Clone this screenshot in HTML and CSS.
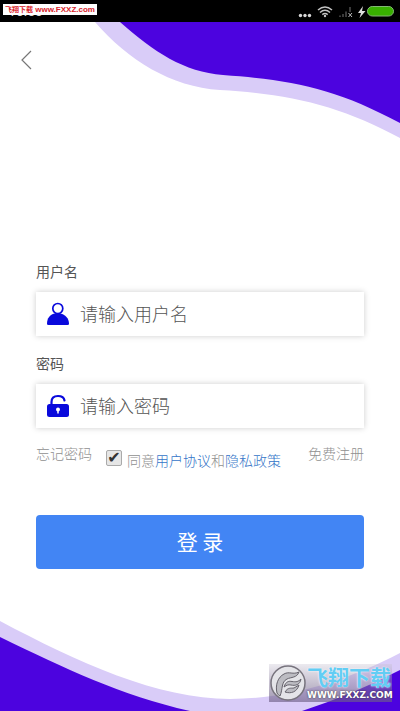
FILE: index.html
```html
<!DOCTYPE html>
<html lang="zh-CN">
<head>
<meta charset="utf-8">
<meta name="viewport" content="width=device-width, initial-scale=1">
<title>登录</title>
<link rel="stylesheet" href="styles.css">
</head>
<body>
<header class="status">
  <span class="clock">16:53</span>
  <span class="site-tag"><span class="site-name">飞翔下载</span> www.FXXZ.com</span>
  <svg class="status-icons" width="98" height="14" viewBox="0 0 98 14" aria-hidden="true">
    <g fill="#d8d8d8"><circle cx="2.500" cy="10.500" r="1.700"/><circle cx="7" cy="10.500" r="1.700"/><circle cx="11.500" cy="10.500" r="1.700"/></g>
    <g fill="none" stroke="#c4c4c4" stroke-width="1.500"><path d="M20 5Q27 -1 34 5M22 7.500Q27 3 32 7.500M24.300 9.700Q27 7.500 29.700 9.700"/></g>
    <circle cx="27" cy="11" r="1.200" fill="#c4c4c4"/>
    <path d="M42 12V10.500M45 12V9M48 12V6.500M52 7V2" stroke="#3a3a3a" stroke-width="2"/>
    <path d="M50.500 8L54 12M54 8L50.500 12" stroke="#bbb" stroke-width="1"/>
    <path d="M65 1L60 8H63L61.500 13L67.500 6H64Z" fill="#ddd"/>
    <rect x="69.500" y="1.500" width="26" height="9.500" rx="4.700" fill="#38b000" stroke="#83b972"/>
  </svg>
</header>
<main class="screen">
  <svg class="wave wave-top" viewBox="0 22 400 120" preserveAspectRatio="none" aria-hidden="true">
    <path fill="#d9ccf8" d="M95 22C128 60 171 87 220 90C290 94 341 106 400 138V22Z"/>
    <path fill="#4c03df" d="M120 22C154 52 184 72 223 75C292 80 335 88 400 123V22Z"/>
  </svg>
  <svg class="wave wave-bottom" viewBox="0 611 400 100" preserveAspectRatio="none" aria-hidden="true">
    <path fill="#d9ccf8" d="M0 621C77 662 158 699 230 699C292 699 350 679 400 653V711H0Z"/>
    <path fill="#4c03df" d="M0 637C66 669 120 695 190 711H0ZM302 711Q354 694 400 670V711Z"/>
  </svg>
  <a class="back" href="#" aria-label="返回">
    <svg width="12" height="20" viewBox="0 0 12 20"><path d="M11 1L2 10L11 19" fill="none" stroke="#777" stroke-width="1.200"/></svg>
  </a>
  <form class="login">
    <label class="label" for="user">用户名</label>
    <div class="field">
      <svg class="icon" width="24" height="24" viewBox="0 0 24 24" aria-hidden="true">
        <path d="M1 22C1 16 4 12.500 8.500 11.500H14.500C19 12.500 23 16 23 22Q23 23 21.500 23H2.500Q1 23 1 22Z" fill="#0909dc"/>
        <circle cx="11.800" cy="6.500" r="5" fill="#fff" stroke="#0909dc" stroke-width="1.700"/>
      </svg>
      <input class="input" id="user" type="text" placeholder="请输入用户名">
    </div>
    <label class="label" for="pass">密码</label>
    <div class="field">
      <svg class="icon" width="24" height="24" viewBox="0 0 24 24" aria-hidden="true">
        <path d="M5.500 12V8C5.500 4 8 2 12 2C15.500 2 18 3.500 18.500 6.500" fill="none" stroke="#0909dc" stroke-width="2.200" stroke-linecap="round"/>
        <rect x="1" y="10" width="22" height="13" rx="2.500" fill="#0909dc"/>
        <circle cx="12" cy="15.500" r="2" fill="#fff"/><path d="M12 16V19.500" stroke="#fff" stroke-width="1.500"/>
      </svg>
      <input class="input" id="pass" type="password" placeholder="请输入密码">
    </div>
    <div class="options">
      <a class="muted" href="#">忘记密码</a>
      <div class="agree">
        <input class="check" id="agree" type="checkbox" checked>
        <span><label for="agree">同意</label><a class="link" href="#">用户协议</a>和<a class="link" href="#">隐私政策</a></span>
      </div>
      <a class="muted register" href="#">免费注册</a>
    </div>
    <button class="submit" type="submit">登 录</button>
  </form>
  <div class="brand">
    <svg class="brand-logo" width="38" height="38" viewBox="0 0 38 38" aria-hidden="true">
      <circle cx="19" cy="19" r="17" fill="#e4e4e8" stroke="#77737d" stroke-width="1.500"/>
      <path d="M8 29C6 21 9 13 15 10C20 7 24 11 30 8C28 14 22 13 18 15C12 18 14 25 11 32Q9 31 8 29ZM15 23C17 17 20 17 23 17.500C27 18 29 18 32 15C31 21 26 22 22 21C19 20.500 18 21 15 23ZM16 28C19 23 22 24.500 25 24L30 21C28 28 22 30 16 28Z" fill="#bcbcc2" stroke="#66636c"/>
    </svg>
    <div class="brand-text"><span class="brand-name">飞翔下载</span><span class="brand-url">WWW.FXXZ.COM</span></div>
  </div>
</main>
</body>
</html>
```

FILE: styles.css
```css
* { box-sizing: border-box; }

body {
  display: flex;
  flex-direction: column;
  min-height: 100vh;
  margin: 0;
  background: #fff;
  color: #444;
  font-family: "Noto Sans CJK SC", sans-serif;
  font-size: 14px;
  font-weight: 300;
}

a { color: inherit; text-decoration: none; }

.status {
  position: relative;
  display: flex;
  align-items: center;
  justify-content: space-between;
  height: 22px;
  padding: 0 4px 0 8px;
  background: #000;
  color: #ddd;
}

.clock { font: 14px/22px Roboto, sans-serif; }

.site-tag {
  position: absolute;
  top: 4px;
  left: 3px;
  padding: 0 2px;
  background: #fff;
  color: #d8232a;
  font: bold 8px/11px "Liberation Sans", sans-serif;
  white-space: nowrap;
}

.site-name { font: bold 7px/11px "Noto Sans CJK SC", sans-serif; }

.status-icons { display: block; margin-top: 2px; }

.screen {
  position: relative;
  display: flex;
  flex: 1;
  flex-direction: column;
  overflow: hidden;
}

.wave { position: absolute; left: 0; width: 100%; }
.wave-top { top: 0; height: 120px; }
.wave-bottom { bottom: 0; height: 100px; }

.back {
  position: relative;
  align-self: flex-start;
  margin: 28px 20px 0;
  height: 20px;
}

.back svg { display: block; }

.login {
  position: relative;
  display: flex;
  flex-direction: column;
  margin: 191px 36px 0;
}

.label { line-height: 20px; font-weight: 400; color: #555; }

.field {
  display: flex;
  align-items: center;
  gap: 10px;
  height: 44px;
  margin: 11px 0 17px;
  padding: 0 10px;
  background: #fff;
  box-shadow: 0 0 6px #ccc;
}

.input {
  flex: 1;
  min-width: 0;
  padding: 0 0 2px;
  border: 0;
  outline: 0;
  background: none;
  color: #444;
  font: 300 18px/26px "Noto Sans CJK SC", sans-serif;
}

.input::placeholder { color: #555; opacity: 1; }

.options {
  display: flex;
  align-items: flex-start;
  color: #909090;
  line-height: 20px;
  margin-top: -2px;
}

.agree { display: flex; gap: 5px; margin: 7px 0 0 14px; }

.check {
  appearance: none;
  width: 16px;
  height: 16px;
  margin: 0;
  border: 1px solid #aaa;
  border-radius: 2px;
  background: #e6e6e6;
}

.check::before {
  content: "✔";
  display: block;
  color: #333;
  font: 16px/14px "DejaVu Sans", sans-serif;
  text-align: center;
}

.link { color: #3575c8; }
.register { margin-left: auto; }

.submit {
  height: 54px;
  margin-top: 45px;
  padding: 0 0 2px;
  border: 0;
  border-radius: 4px;
  background: #4285f4;
  color: #fff;
  font: 400 21px/30px "Noto Sans CJK SC", sans-serif;
}

.brand {
  position: absolute;
  right: 8px;
  bottom: 9px;
  display: flex;
  height: 38px;
  background: linear-gradient(to bottom, rgb(200 195 210 / 35%), rgb(110 95 135 / 65%));
}

.brand-text { display: flex; flex-direction: column; width: 85px; }

.brand-name {
  color: #62cdf4;
  font-size: 21px;
  font-weight: 700;
  line-height: 25px;
  white-space: nowrap;
  text-shadow: 0 0 2px #fff;
}

.brand-url {
  color: #fff;
  font: bold 9px/12px "DejaVu Sans", sans-serif;
  text-shadow: 0 0 2px #333;
}
```
